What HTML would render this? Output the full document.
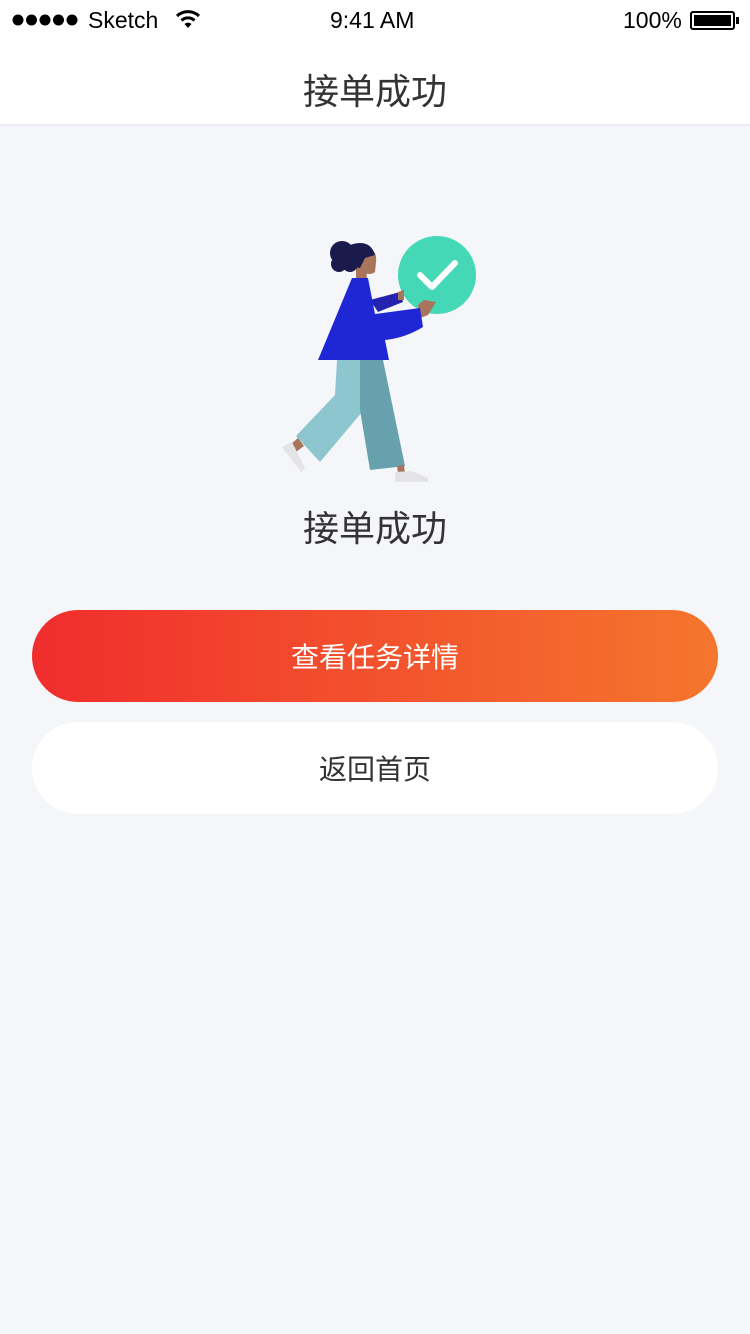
<!DOCTYPE html>
<html><head><meta charset="utf-8"><style>
*{margin:0;padding:0;box-sizing:border-box}
body{width:750px;height:1334px;background:#f5f6fa;font-family:"Liberation Sans","Noto Sans CJK SC",sans-serif;position:relative;overflow:hidden}
.top{position:absolute;left:0;top:0;width:750px;height:126px;background:#fff;border-bottom:2px solid #ececf0}
.sb{position:absolute;top:7px;font-size:23px;color:#000}
.title{position:absolute;top:63px;width:750px;text-align:center;font-size:36px;color:#333}
.h2{position:absolute;top:500px;width:750px;text-align:center;font-size:36px;color:#333}
.btn{position:absolute;left:32px;width:686px;height:92px;border-radius:46px;text-align:center;line-height:96px;font-size:28px}
.b1{top:610px;background:linear-gradient(90deg,#f02d2d,#f5762d);color:#fff}
.b2{top:722px;background:#fff;color:#333}
</style></head><body>
<div class="top">
<svg style="position:absolute;left:12px;top:14px" width="70" height="12"><g fill="#000"><circle cx="6" cy="6" r="5.5"/><circle cx="19.5" cy="6" r="5.5"/><circle cx="33" cy="6" r="5.5"/><circle cx="46.5" cy="6" r="5.5"/><circle cx="60" cy="6" r="5.5"/></g></svg>
<div class="sb" style="left:88px">Sketch</div>
<svg style="position:absolute;left:175px;top:9px" width="26" height="20" viewBox="0 0 26 20"><path d="M2 7 A16 16 0 0 1 24 7" stroke="#000" stroke-width="3" fill="none"/><path d="M6.5 11.5 A9.5 9.5 0 0 1 19.5 11.5" stroke="#000" stroke-width="3" fill="none"/><path d="M9.5 15 L13 19 L16.5 15 A5 5 0 0 0 9.5 15Z" fill="#000"/></svg>
<div class="sb" style="left:330px">9:41 AM</div>
<div class="sb" style="left:623px">100%</div>
<div style="position:absolute;left:690px;top:11px;width:45px;height:19px;border:2px solid #000;border-radius:3px;padding:2px"><div style="width:100%;height:100%;background:#000"></div></div>
<div style="position:absolute;left:736px;top:17px;width:3px;height:7px;background:#000"></div>
<div class="title">接单成功</div>
</div>
<svg style="position:absolute;left:0;top:0" width="750" height="500">
<path d="M370 300 L400 292 L403 302 L378 312Z" fill="#2323b0"/>
<circle cx="437" cy="275" r="39" fill="#45d8b6"/>
<path d="M420 275 L432 287 L455 263" stroke="#fff" stroke-width="6" fill="none" stroke-linecap="round" stroke-linejoin="round"/>
<path d="M398 292 L404 290 L404 300 L398 300Z" fill="#a8745a"/>
<path d="M418 305 L424 300 L436 302 L428 315 L420 318Z" fill="#a8745a"/>
<path d="M337 360 L372 360 L368 405 L320 462 L296 436 L335 395Z" fill="#8dc6cf"/>
<path d="M360 360 L383 360 L405 466 L370 470 L360 410Z" fill="#68a1ae"/>
<path d="M290 445 L298 438 L304 446 L296 452Z" fill="#a8745a"/>
<path d="M282 447 L292 442 L305 468 L301 472Z" fill="#e4e4e6"/>
<path d="M397 466 L404 465 L405 473 L398 473Z" fill="#a8745a"/>
<path d="M395 472 L412 471 L428 478 L428 482 L395 482Z" fill="#e4e4e6"/>
<path d="M356 265 L366 265 L367 280 L356 280Z" fill="#a8745a"/>
<path d="M358 250 Q378 245 376 262 L375 272 Q370 276 362 272Z" fill="#a8745a"/>
<circle cx="342" cy="253" r="12" fill="#1b1a4c"/>
<circle cx="339" cy="264" r="8" fill="#1b1a4c"/>
<circle cx="350" cy="264" r="8" fill="#1b1a4c"/>
<path d="M350 245 Q370 238 375 255 L365 258 L360 268 L350 266Z" fill="#1b1a4c"/>
<path d="M352 278 L368 278 L375 314 L420 308 L423 327 Q405 338 385 340 L389 360 L318 360Z" fill="#1f26d3"/>
</svg>
<div class="h2">接单成功</div>
<div class="btn b1">查看任务详情</div>
<div class="btn b2">返回首页</div>
</body></html>
